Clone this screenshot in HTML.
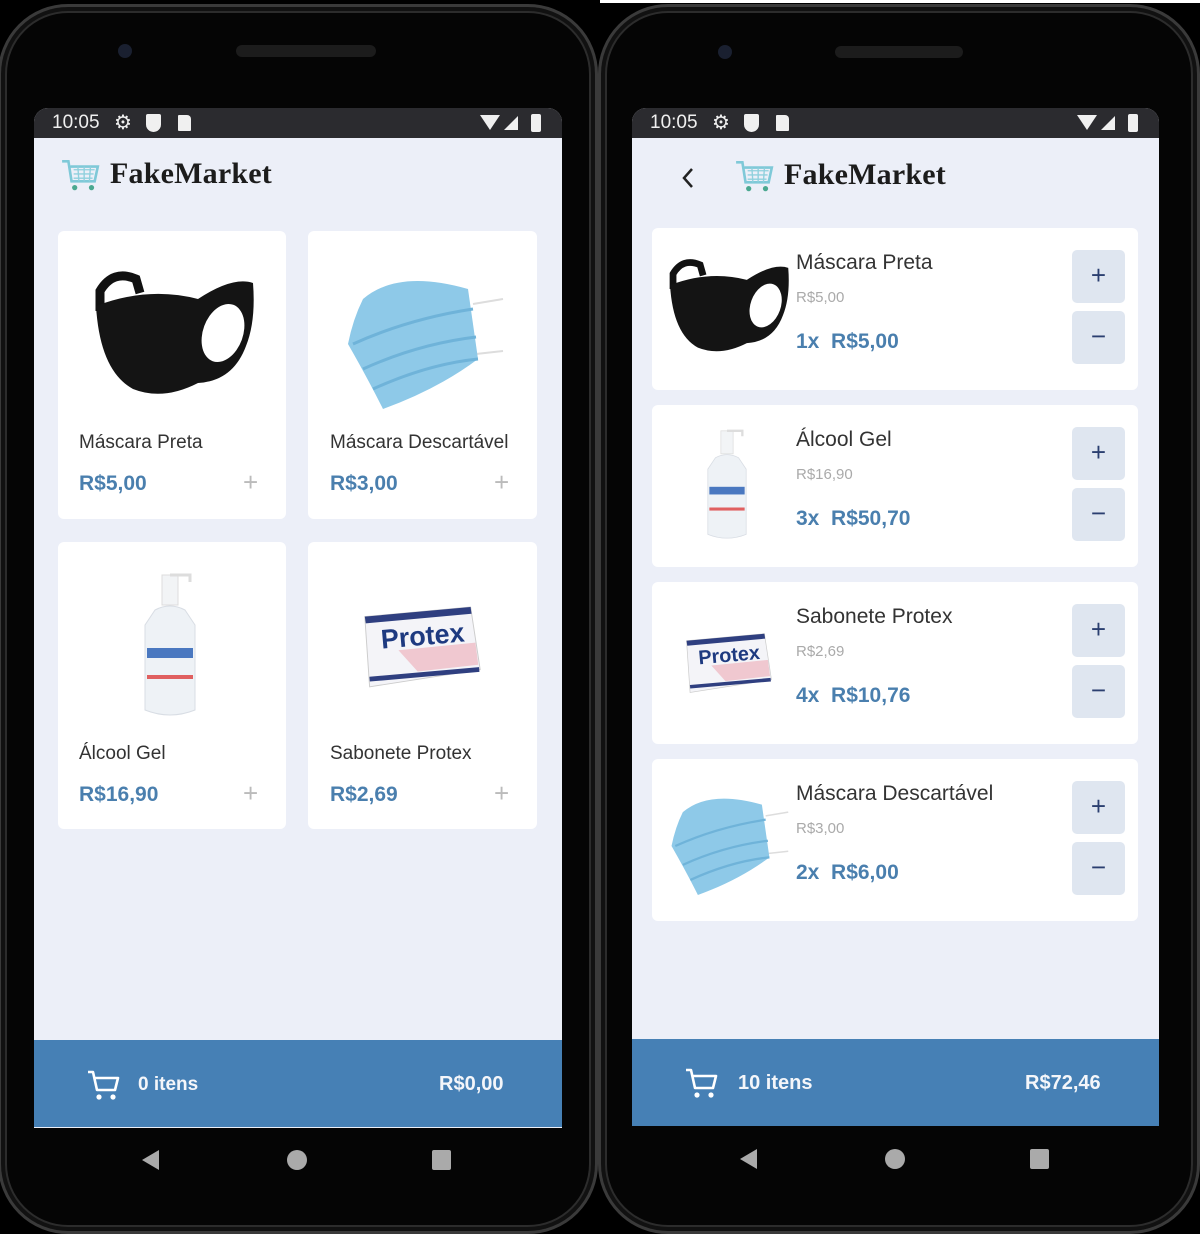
<!DOCTYPE html>
<html><head><meta charset="utf-8"><style>
*{margin:0;padding:0;box-sizing:border-box}
body{width:1200px;height:1200px;background:#000;position:relative;overflow:hidden;font-family:"Liberation Sans",sans-serif}
.a{position:absolute}
.frame{position:absolute;border:3px solid #3a3a3a;border-radius:70px;background:#050505;box-shadow:inset 0 0 0 4px #111,inset 0 0 0 6px #2c2c2c}
.screen{position:absolute;background:#eceff8;overflow:hidden;border-radius:14px 14px 0 0}
.status{position:absolute;left:0;top:0;right:0;height:30px;background:#2b2b2f;color:#f0f0f0;font-size:19px}
.card{position:absolute;background:#fff;border-radius:6px}
.nm{position:absolute;font-size:19px;color:#333}
.pr{position:absolute;font-size:21px;font-weight:bold;color:#4a7fae}
.pl{position:absolute;font-size:26px;color:#bbb;font-weight:300}
.bar{position:absolute;left:0;right:0;height:87px;background:#4680b5;color:#f4f6fa;font-weight:bold;font-size:19px}
.btn{position:absolute;width:53px;height:53px;background:#dfe6f0;border-radius:5px;color:#2b3f70;font-size:26px;text-align:center;line-height:50px}
.rn{position:absolute;font-size:21px;color:#333}
.rp{position:absolute;font-size:15px;color:#aaa}
.rq{position:absolute;font-size:21px;font-weight:bold;color:#4a7fae}
.logo{position:absolute;font-family:"Liberation Serif",serif;font-size:30px;font-weight:bold;color:#1c1c1c;letter-spacing:0.2px}
</style></head><body>
<svg width="0" height="0" style="position:absolute">
<defs>
<symbol id="bm" viewBox="0 0 170 140">
<path d="M12 50 L12 30 Q25 8 48 18 L52 32" fill="none" stroke="#111" stroke-width="9"/>
<path d="M8 45 Q60 25 110 38 Q145 15 165 22 Q168 60 158 85 Q145 120 110 122 Q75 140 45 128 Q12 110 8 45Z" fill="#141414"/>
<ellipse cx="135" cy="72" rx="20" ry="30" fill="#fff" transform="rotate(20 135 72)"/>
</symbol>
<symbol id="blm" viewBox="0 0 170 150">
<path d="M135 45 L165 40 M138 95 L165 92" stroke="#ddd" stroke-width="2"/>
<path d="M25 40 Q60 10 130 30 L140 100 Q100 130 45 150 Q30 120 10 85 Q15 60 25 40Z" fill="#8ec9e8"/>
<path d="M15 85 Q70 60 135 50 M25 110 Q80 85 138 78 M35 130 Q90 105 140 100" stroke="#6fb3d9" stroke-width="3" fill="none"/>
</symbol>
<symbol id="bt" viewBox="0 0 60 150">
<rect x="22" y="5" width="16" height="30" fill="#f2f4f6" stroke="#ddd"/>
<path d="M30 5 L50 5 L50 12" stroke="#ddd" stroke-width="3" fill="none"/>
<path d="M15 40 Q30 32 45 40 L55 55 L55 140 Q30 150 5 140 L5 55Z" fill="#eef2f6" stroke="#d8dde4"/>
<rect x="7" y="78" width="46" height="10" fill="#4a78c0"/>
<rect x="7" y="105" width="46" height="4" fill="#e06060"/>
</symbol>
<symbol id="sp" viewBox="0 0 130 90">
<path d="M5 15 L115 5 L125 70 L10 88Z" fill="#f4f4f8" stroke="#ccc"/>
<path d="M5 15 L115 5 L116 12 L6 22Z" fill="#2f3f80"/>
<path d="M40 50 L120 42 L123 65 L60 72Z" fill="#f0c8d0"/>
<text x="22" y="45" font-family="Liberation Sans" font-weight="bold" font-size="28" fill="#1e3a80" transform="rotate(-5 60 40)">Protex</text>
<path d="M10 80 L124 70" stroke="#2f3f80" stroke-width="5"/>
</symbol>
<symbol id="cart" viewBox="0 0 40 32">
<path d="M2 3 L8 3 L11 22 L33 22 L36 8 L10 8" fill="none" stroke="#7fc9d8" stroke-width="2.5"/>
<path d="M13 11 L33 11 M13 15 L32 15 M13 19 L31 19 M17 8 L18 22 M23 8 L23 22 M29 8 L28 22" stroke="#8fd0dd" stroke-width="1.3"/>
<circle cx="14" cy="28" r="2.5" fill="#4aa890"/><circle cx="30" cy="28" r="2.5" fill="#4aa890"/>
</symbol>
<symbol id="wc" viewBox="0 0 34 34">
<path d="M2 4 L7 4 L11 22 L29 22 L32 10 L9 10" fill="none" stroke="#fff" stroke-width="2.6" stroke-linejoin="round"/>
<circle cx="13" cy="29" r="2.6" fill="#fff"/><circle cx="27" cy="29" r="2.6" fill="#fff"/>
</symbol>
</defs></svg>

<!-- LEFT PHONE -->
<div class="frame" style="left:-2px;top:4px;width:600px;height:1230px"></div>
<div class="a" style="left:118px;top:44px;width:14px;height:14px;border-radius:50%;background:#1a2030"></div>
<div class="a" style="left:236px;top:45px;width:140px;height:12px;border-radius:6px;background:#1c1c1c"></div>
<div class="screen" style="left:34px;top:108px;width:528px;height:1020px">
 <div class="status"><span class="a" style="left:18px;top:4px">10:05</span>
  <span class="a" style="left:80px;top:2px;font-size:20px">⚙</span>
  <span class="a" style="left:112px;top:6px;width:15px;height:18px;background:#f0f0f0;border-radius:2px 2px 8px 8px"></span>
  <span class="a" style="left:144px;top:7px;width:13px;height:16px;background:#f0f0f0;border-radius:1px 4px 1px 1px"></span>
  <span class="a" style="left:446px;top:7px;width:0;height:0;border-left:10px solid transparent;border-right:10px solid transparent;border-top:15px solid #f0f0f0"></span>
  <span class="a" style="left:470px;top:8px;width:0;height:0;border-left:14px solid transparent;border-bottom:14px solid #f0f0f0"></span>
  <span class="a" style="left:497px;top:6px;width:10px;height:18px;background:#f0f0f0;border-radius:2px"></span>
 </div>
 <svg class="a" style="left:26px;top:50px" width="42" height="34"><use href="#cart"/></svg>
 <div class="logo" style="left:76px;top:49px">FakeMarket</div>

 <div class="card" style="left:24px;top:123px;width:228px;height:288px">
  <svg class="a" style="left:30px;top:30px" width="170" height="140"><use href="#bm"/></svg>
  <div class="nm" style="left:21px;top:201px">Máscara Preta</div>
  <div class="pr" style="left:21px;top:241px">R$5,00</div>
  <div class="pl" style="left:185px;top:236px">+</div>
 </div>
 <div class="card" style="left:274px;top:123px;width:229px;height:288px">
  <svg class="a" style="left:30px;top:28px" width="170" height="150"><use href="#blm"/></svg>
  <div class="nm" style="left:22px;top:201px">Máscara Descartável</div>
  <div class="pr" style="left:22px;top:241px">R$3,00</div>
  <div class="pl" style="left:186px;top:236px">+</div>
 </div>
 <div class="card" style="left:24px;top:434px;width:228px;height:287px">
  <svg class="a" style="left:82px;top:28px" width="60" height="150"><use href="#bt"/></svg>
  <div class="nm" style="left:21px;top:201px">Álcool Gel</div>
  <div class="pr" style="left:21px;top:241px">R$16,90</div>
  <div class="pl" style="left:185px;top:236px">+</div>
 </div>
 <div class="card" style="left:274px;top:434px;width:229px;height:287px">
  <svg class="a" style="left:52px;top:60px" width="125" height="87"><use href="#sp"/></svg>
  <div class="nm" style="left:22px;top:201px">Sabonete Protex</div>
  <div class="pr" style="left:22px;top:241px">R$2,69</div>
  <div class="pl" style="left:186px;top:236px">+</div>
 </div>
 <div class="bar" style="top:932px">
  <svg class="a" style="left:52px;top:28px" width="34" height="34"><use href="#wc"/></svg>
  <span class="a" style="left:104px;top:34px;font-size:19px">0 itens</span>
  <span class="a" style="left:405px;top:33px;font-size:20px">R$0,00</span>
 </div>
</div>
<div class="a" style="left:142px;top:1150px;width:0;height:0;border-top:10px solid transparent;border-bottom:10px solid transparent;border-right:17px solid #aaa"></div>
<div class="a" style="left:287px;top:1150px;width:20px;height:20px;border-radius:50%;background:#aaa"></div>
<div class="a" style="left:432px;top:1150px;width:19px;height:20px;border-radius:2px;background:#aaa"></div>

<!-- RIGHT PHONE -->
<div class="a" style="left:600px;top:0;width:600px;height:3px;background:#fff"></div>
<div class="frame" style="left:598px;top:4px;width:602px;height:1230px"></div>
<div class="a" style="left:718px;top:45px;width:14px;height:14px;border-radius:50%;background:#1a2030"></div>
<div class="a" style="left:835px;top:46px;width:128px;height:12px;border-radius:6px;background:#1c1c1c"></div>
<div class="screen" style="left:632px;top:108px;width:527px;height:1018px">
 <div class="status"><span class="a" style="left:18px;top:4px">10:05</span>
  <span class="a" style="left:80px;top:2px;font-size:20px">⚙</span>
  <span class="a" style="left:112px;top:6px;width:15px;height:18px;background:#f0f0f0;border-radius:2px 2px 8px 8px"></span>
  <span class="a" style="left:144px;top:7px;width:13px;height:16px;background:#f0f0f0;border-radius:1px 4px 1px 1px"></span>
  <span class="a" style="left:445px;top:7px;width:0;height:0;border-left:10px solid transparent;border-right:10px solid transparent;border-top:15px solid #f0f0f0"></span>
  <span class="a" style="left:469px;top:8px;width:0;height:0;border-left:14px solid transparent;border-bottom:14px solid #f0f0f0"></span>
  <span class="a" style="left:496px;top:6px;width:10px;height:18px;background:#f0f0f0;border-radius:2px"></span>
 </div>
 <svg class="a" style="left:48px;top:58px" width="16" height="24"><path d="M12 3 L4 12 L12 21" fill="none" stroke="#222" stroke-width="2.5"/></svg>
 <svg class="a" style="left:102px;top:51px" width="42" height="34"><use href="#cart"/></svg>
 <div class="logo" style="left:152px;top:50px">FakeMarket</div>

 <div class="card" style="left:20px;top:120px;width:486px;height:162px">
  <svg class="a" style="left:12px;top:20px" width="128" height="112"><use href="#bm"/></svg>
  <div class="rn" style="left:144px;top:23px">Máscara Preta</div>
  <div class="rp" style="left:144px;top:61px">R$5,00</div>
  <div class="rq" style="left:144px;top:102px">1x&nbsp;&nbsp;R$5,00</div>
  <div class="btn" style="left:420px;top:22px">+</div><div class="btn" style="left:420px;top:83px">−</div>
 </div>
 <div class="card" style="left:20px;top:297px;width:486px;height:162px">
  <svg class="a" style="left:52px;top:22px" width="46" height="115"><use href="#bt"/></svg>
  <div class="rn" style="left:144px;top:23px">Álcool Gel</div>
  <div class="rp" style="left:144px;top:61px">R$16,90</div>
  <div class="rq" style="left:144px;top:102px">3x&nbsp;&nbsp;R$50,70</div>
  <div class="btn" style="left:420px;top:22px">+</div><div class="btn" style="left:420px;top:83px">−</div>
 </div>
 <div class="card" style="left:20px;top:474px;width:486px;height:162px">
  <svg class="a" style="left:31px;top:48px" width="92" height="64"><use href="#sp"/></svg>
  <div class="rn" style="left:144px;top:23px">Sabonete Protex</div>
  <div class="rp" style="left:144px;top:61px">R$2,69</div>
  <div class="rq" style="left:144px;top:102px">4x&nbsp;&nbsp;R$10,76</div>
  <div class="btn" style="left:420px;top:22px">+</div><div class="btn" style="left:420px;top:83px">−</div>
 </div>
 <div class="card" style="left:20px;top:651px;width:486px;height:162px">
  <svg class="a" style="left:12px;top:22px" width="128" height="115"><use href="#blm"/></svg>
  <div class="rn" style="left:144px;top:23px">Máscara Descartável</div>
  <div class="rp" style="left:144px;top:61px">R$3,00</div>
  <div class="rq" style="left:144px;top:102px">2x&nbsp;&nbsp;R$6,00</div>
  <div class="btn" style="left:420px;top:22px">+</div><div class="btn" style="left:420px;top:83px">−</div>
 </div>
 <div class="bar" style="top:931px">
  <svg class="a" style="left:52px;top:27px" width="34" height="34"><use href="#wc"/></svg>
  <span class="a" style="left:106px;top:33px;font-size:20px">10 itens</span>
  <span class="a" style="left:393px;top:33px;font-size:20px">R$72,46</span>
 </div>
</div>
<div class="a" style="left:740px;top:1149px;width:0;height:0;border-top:10px solid transparent;border-bottom:10px solid transparent;border-right:17px solid #aaa"></div>
<div class="a" style="left:885px;top:1149px;width:20px;height:20px;border-radius:50%;background:#aaa"></div>
<div class="a" style="left:1030px;top:1149px;width:19px;height:20px;border-radius:2px;background:#aaa"></div>
</body></html>
